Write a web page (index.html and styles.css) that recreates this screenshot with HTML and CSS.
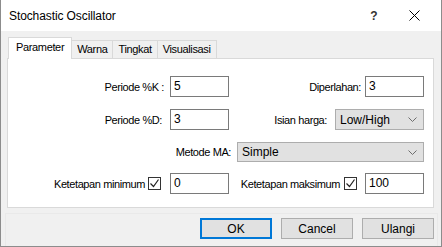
FILE: index.html
```html
<!DOCTYPE html>
<html>
<head>
    <title>Stochastic Oscillator</title>
    <link rel="stylesheet" href="styles.css">
</head>
<body>
    <div class="window">
        <div class="titlebar">
            <span class="title">Stochastic Oscillator</span>
            <span class="help">?</span>
            <span class="close">
                <svg width="11" height="11" viewBox="0 0 11 11" fill="none" stroke="#000" stroke-width="1">
                    <path d="M0.5 0.5l10 10M10.5 0.5l-10 10"/>
                </svg>
            </span>
        </div>
        <div class="client">
            <div class="tabs">
                <div class="tab active">Parameter</div>
                <div class="tab">Warna</div>
                <div class="tab">Tingkat</div>
                <div class="tab">Visualisasi</div>
            </div>
            <div class="panel">
                <div class="row">
                    <div class="group left k-group">
                        <span class="label">Periode %K :</span>
                        <div class="input">5</div>
                    </div>
                    <div class="group right slow-group">
                        <span class="label">Diperlahan:</span>
                        <div class="input">3</div>
                    </div>
                </div>
                <div class="row">
                    <div class="group left d-group">
                        <span class="label">Periode %D:</span>
                        <div class="input">3</div>
                    </div>
                    <div class="group right price-group">
                        <span class="label">Isian harga:</span>
                        <div class="select short">
                            <span>Low/High</span>
                            <svg class="caret" width="9" height="5" viewBox="0 0 9 5" fill="none" stroke="#6d6d6d" stroke-width="1">
                                <path d="M0.5 0.5l4 4 4-4"/>
                            </svg>
                        </div>
                    </div>
                </div>
                <div class="row row-ma">
                    <div class="group right ma-group">
                        <span class="label">Metode MA:</span>
                        <div class="select wide">
                            <span>Simple</span>
                            <svg class="caret" width="9" height="5" viewBox="0 0 9 5" fill="none" stroke="#6d6d6d" stroke-width="1">
                                <path d="M0.5 0.5l4 4 4-4"/>
                            </svg>
                        </div>
                    </div>
                </div>
                <div class="row row-limits">
                    <div class="group left">
                        <span class="label">Ketetapan minimum</span>
                        <span class="check">
                            <svg width="11" height="11" viewBox="0 0 11 11" fill="none" stroke="#222" stroke-width="1.2">
                                <path d="M1.5 5.5l3 3 5-7"/>
                            </svg>
                        </span>
                        <div class="input">0</div>
                    </div>
                    <div class="group right">
                        <span class="label">Ketetapan maksimum</span>
                        <span class="check">
                            <svg width="11" height="11" viewBox="0 0 11 11" fill="none" stroke="#222" stroke-width="1.2">
                                <path d="M1.5 5.5l3 3 5-7"/>
                            </svg>
                        </span>
                        <div class="input">100</div>
                    </div>
                </div>
            </div>
            <div class="footer">
                <button class="btn default">OK</button>
                <button class="btn">Cancel</button>
                <button class="btn">Ulangi</button>
            </div>
        </div>
    </div>
</body>
</html>
```

FILE: styles.css
```css
body {
    margin: 0;
    font-family: "Liberation Sans", Arial, sans-serif;
    font-size: 11px;
    color: #000;
    background-color: #f0f0f0;
}
.window {
    width: 442px;
    height: 247px;
    box-sizing: border-box;
    background-color: #f0f0f0;
    border-left: 1px solid #8c8c8c;
    border-right: 1px solid #8c8c8c;
    border-bottom: 1px solid #8c8c8c;
    overflow: hidden;
}
.titlebar {
    height: 31px;
    background-color: #ffffff;
    display: flex;
    align-items: center;
    padding: 0 7px 0 8px;
}
.title {
    font-size: 12px;
    flex: 1;
    padding-top: 1px;
    letter-spacing: -0.1px;
}
.help {
    width: 40px;
    text-align: center;
    font-size: 12px;
    font-weight: bold;
    color: #333;
}
.close {
    width: 40px;
    display: flex;
    justify-content: center;
}
.client {
    padding: 0 7px 0 6px;
}
.tabs {
    display: flex;
    align-items: flex-end;
    height: 21px;
    margin-top: 6px;
    margin-left: 1px;
}
.tab {
    height: 18px;
    box-sizing: border-box;
    line-height: 16px;
    padding: 0 5px;
    border: 1px solid #d9d9d9;
    border-bottom: none;
    margin-left: -1px;
    background-color: #f0f0f0;
    letter-spacing: -0.35px;
}
.tab.active {
    height: 22px;
    line-height: 19px;
    padding: 0 7px;
    margin-left: 0;
    margin-bottom: -1px;
    background-color: #ffffff;
    position: relative;
    z-index: 1;
}
.panel {
    height: 150px;
    box-sizing: border-box;
    background-color: #ffffff;
    border: 1px solid #d9d9d9;
    padding: 17px 9px 0 0;
    display: flex;
    flex-direction: column;
    gap: 12px;
}
.row {
    display: flex;
    height: 21px;
}
.row-ma {
    height: 20px;
}
.row-limits {
    margin-top: -1px;
}
.group {
    display: flex;
    align-items: center;
    justify-content: flex-end;
}
.group.left {
    width: 221px;
}
.group.right {
    flex: 1;
}
.label {
    white-space: nowrap;
    letter-spacing: -0.4px;
}
.k-group .label {
    margin-right: 6px;
}
.d-group .label {
    margin-right: 8px;
}
.slow-group .label {
    margin-right: 4px;
}
.price-group .label {
    margin-right: 8px;
}
.ma-group .label {
    margin-right: 6px;
}
.input {
    width: 59px;
    height: 21px;
    box-sizing: border-box;
    border: 1px solid #7a7a7a;
    background-color: #ffffff;
    padding: 0 3px;
    line-height: 19px;
    font-size: 12px;
}
.select {
    height: 21px;
    box-sizing: border-box;
    border: 1px solid #adadad;
    background-color: #e1e1e1;
    display: flex;
    align-items: center;
    justify-content: space-between;
    padding: 0 6px 0 4px;
    font-size: 12px;
}
.select.short {
    width: 89px;
}
.select.wide {
    width: 187px;
    height: 20px;
}
.check {
    width: 13px;
    height: 13px;
    box-sizing: border-box;
    border: 1px solid #333333;
    background-color: #ffffff;
    display: flex;
    align-items: center;
    justify-content: center;
    margin: 0 9px 0 3px;
}
.row-limits .right .check {
    margin: 0 8px 0 4px;
}
.footer {
    display: flex;
    justify-content: flex-end;
    gap: 9px;
    margin: 5px -4px 0 -2px;
    padding: 4px 3px 0 0;
    height: 34px;
    box-sizing: border-box;
    border: 1px solid #e9e9e9;
    border-bottom: none;
}
.btn {
    width: 72px;
    height: 21px;
    box-sizing: border-box;
    border: 1px solid #adadad;
    background-color: #e1e1e1;
    font-family: "Liberation Sans", Arial, sans-serif;
    font-size: 12px;
    color: #000;
    padding: 0;
}
.btn.default {
    border: 2px solid #0078d7;
}
```
